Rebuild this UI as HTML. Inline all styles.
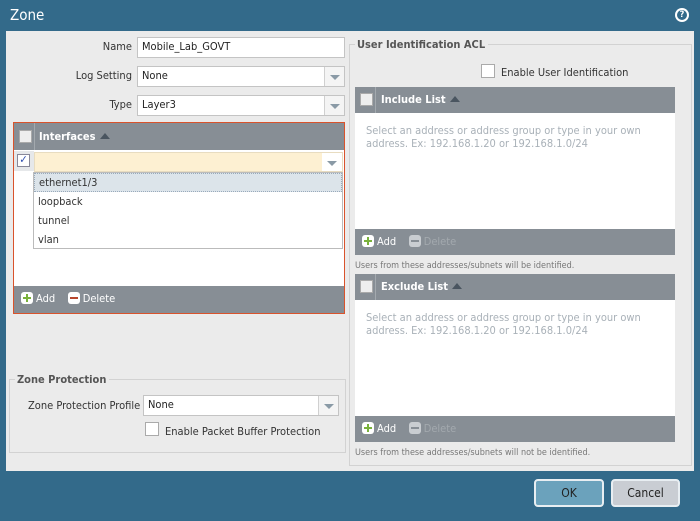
<!DOCTYPE html>
<html><head><style>
*{box-sizing:border-box;margin:0;padding:0}
body{width:700px;height:521px;background:#336a8a;font-family:"DejaVu Sans Condensed","Liberation Sans Narrow","Liberation Sans",sans-serif;font-size:11px;color:#333;position:relative;overflow:hidden}
.a{position:absolute}
.inp{position:absolute;background:#fff;border:1px solid #c4c4c4;padding:2px 4px;font-size:11px;line-height:14px;color:#222}
.dd{position:absolute;right:0;top:0;bottom:0;width:20px;border-left:1px solid #d0d0d0;background:#f4f4f4}
.dd:after{content:"";position:absolute;left:5px;top:8px;border-left:5px solid transparent;border-right:5px solid transparent;border-top:5px solid #8a9aa6}
.lbl{position:absolute;text-align:right;width:130px;font-size:11px;color:#333}
.hdr{position:absolute;background:#878e95;color:#fff;font-weight:bold;font-size:11px}
.cb{position:absolute;width:13px;height:13px;background:#fff;border:1px solid #aaa}
.tri{display:inline-block;border-left:5px solid transparent;border-right:5px solid transparent;border-bottom:6px solid #4a5560;margin-left:4px;vertical-align:1px}
.plus{display:inline-block;width:12px;height:12px;border-radius:3px;background:#fff;position:relative;vertical-align:-2px;margin-right:3px}
.plus:before{content:"";position:absolute;left:5px;top:2px;width:2px;height:8px;background:#7ab23c}
.plus:after{content:"";position:absolute;left:2px;top:5px;width:8px;height:2px;background:#7ab23c}
.minus{display:inline-block;width:12px;height:12px;border-radius:3px;background:#fff;position:relative;vertical-align:-2px;margin-right:3px}
.minus:after{content:"";position:absolute;left:2px;top:5px;width:8px;height:2px;background:#b8472e}
.minus.dis{background:#c9cdd1}.minus.dis:after{background:#878e95}
.ftr{position:absolute;background:#878e95;color:#fff;font-size:11px;padding-left:7px;line-height:26px}
.ph{color:#a9b1b8;font-size:11px;line-height:13px}
.note{position:absolute;font-size:9px;color:#777}
</style></head><body>
<div class="a" style="left:10px;top:6px;color:#fff;font-size:15px">Zone</div>
<div class="a" style="left:675px;top:8px;width:14px;height:14px;border-radius:50%;background:#fff;"><div style="position:absolute;left:2px;top:2px;width:10px;height:10px;border-radius:50%;background:#336a8a;color:#fff;font-size:9px;font-weight:bold;text-align:center;line-height:10px">?</div></div>
<div class="a" style="left:6px;top:31px;width:688px;height:440px;background:#ebebeb"></div>

<div class="lbl" style="left:2px;top:40px">Name</div>
<div class="inp" style="left:137px;top:37px;width:208px;height:21px">Mobile_Lab_GOVT</div>
<div class="lbl" style="left:2px;top:69px">Log Setting</div>
<div class="inp" style="left:137px;top:66px;width:208px;height:21px">None<div class="dd"></div></div>
<div class="lbl" style="left:2px;top:98px">Type</div>
<div class="inp" style="left:137px;top:95px;width:208px;height:21px">Layer3<div class="dd"></div></div>

<div class="a" style="left:13px;top:122px;width:332px;height:192px;border:1px solid #d9532c;background:#fff"></div>
<div class="hdr" style="left:14px;top:123px;width:330px;height:27px;line-height:27px"><div class="cb" style="left:5px;top:7px;background:#eee"></div><div class="a" style="left:20px;top:0;width:1px;height:27px;background:#a3a9ae"></div><span style="margin-left:25px">Interfaces</span><span class="tri"></span></div>
<div class="a" style="left:14px;top:151px;width:20px;height:20px;background:#e6e8ea"></div>
<div class="cb" style="left:17px;top:154px;border-color:#889;font-size:11px;line-height:10px;color:#3050b0;text-align:center">✓</div>
<div class="a" style="left:34px;top:152px;width:309px;height:20px;background:#fdf0d2;border:1px solid #e8dcc0"><div class="dd" style="background:#fff;border-left:none"></div></div>
<div class="a" style="left:33px;top:172px;width:310px;height:77px;background:#fff;border:1px solid #bbb;font-size:11px;line-height:19px">
<div style="background:#dce4ea;border:1px dotted #9ab;padding-left:4px;height:19px;line-height:17px">ethernet1/3</div>
<div style="padding-left:4px">loopback</div><div style="padding-left:4px">tunnel</div><div style="padding-left:4px">vlan</div></div>
<div class="ftr" style="left:14px;top:286px;width:330px;height:27px"><span class="plus"></span>Add&nbsp;&nbsp;&nbsp;&nbsp;<span class="minus"></span>Delete</div>

<div class="a" style="left:9px;top:379px;width:337px;height:74px;border:1px solid #d2d2d2"></div>
<div class="a" style="left:15px;top:373px;background:#ebebeb;padding:0 3px 0 2px;font-weight:bold;color:#555;font-size:11px">Zone Protection</div>
<div class="a" style="left:28px;top:399px;font-size:11px">Zone Protection Profile</div>
<div class="inp" style="left:143px;top:395px;width:196px;height:21px">None<div class="dd"></div></div>
<div class="cb" style="left:145px;top:422px;width:14px;height:14px"></div>
<div class="a" style="left:165px;top:425px;font-size:11px">Enable Packet Buffer Protection</div>

<div class="a" style="left:349px;top:44px;width:343px;height:422px;border:1px solid #d2d2d2"></div>
<div class="a" style="left:355px;top:38px;background:#ebebeb;padding:0 3px 0 2px;font-weight:bold;color:#555;font-size:11px">User Identification ACL</div>
<div class="cb" style="left:481px;top:64px;width:14px;height:14px"></div>
<div class="a" style="left:501px;top:66px;font-size:11px">Enable User Identification</div>

<div class="a" style="left:355px;top:113px;width:320px;height:117px;background:#fff"><div class="ph" style="padding:11px 0 0 11px">Select an address or address group or type in your own<br>address. Ex: 192.168.1.20 or 192.168.1.0/24</div></div>
<div class="hdr" style="left:355px;top:87px;width:320px;height:26px;line-height:26px"><div class="cb" style="left:5px;top:6px;background:#eee"></div><div class="a" style="left:20px;top:0;width:1px;height:26px;background:#a3a9ae"></div><span style="margin-left:26px">Include List</span><span class="tri"></span></div>
<div class="ftr" style="left:355px;top:229px;width:320px;height:26px"><span class="plus"></span>Add&nbsp;&nbsp;&nbsp;&nbsp;<span class="minus dis"></span><span style="color:#a3a9ae">Delete</span></div>
<div class="note" style="left:355px;top:261px">Users from these addresses/subnets will be identified.</div>

<div class="a" style="left:355px;top:300px;width:320px;height:117px;background:#fff"><div class="ph" style="padding:11px 0 0 11px">Select an address or address group or type in your own<br>address. Ex: 192.168.1.20 or 192.168.1.0/24</div></div>
<div class="hdr" style="left:355px;top:274px;width:320px;height:26px;line-height:26px"><div class="cb" style="left:5px;top:6px;background:#eee"></div><div class="a" style="left:20px;top:0;width:1px;height:26px;background:#a3a9ae"></div><span style="margin-left:26px">Exclude List</span><span class="tri"></span></div>
<div class="ftr" style="left:355px;top:416px;width:320px;height:26px"><span class="plus"></span>Add&nbsp;&nbsp;&nbsp;&nbsp;<span class="minus dis"></span><span style="color:#a3a9ae">Delete</span></div>
<div class="note" style="left:355px;top:448px">Users from these addresses/subnets will not be identified.</div>

<div class="a" style="left:534px;top:479px;width:70px;height:28px;background:#6ba2bc;border:2px solid #e8eef2;border-radius:4px;text-align:center;line-height:24px;color:#222;font-size:12px">OK</div>
<div class="a" style="left:611px;top:479px;width:69px;height:28px;background:#c9cdd3;border:2px solid #e8eef2;border-radius:4px;text-align:center;line-height:24px;color:#222;font-size:12px">Cancel</div>
</body></html>
